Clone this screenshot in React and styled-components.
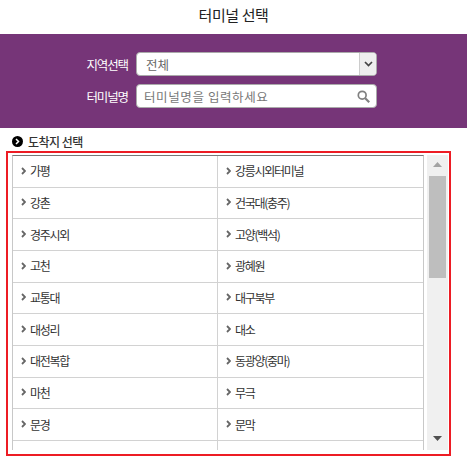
import React from 'react'
import styled, { createGlobalStyle } from 'styled-components'

const GlobalStyle = createGlobalStyle`
  html, body {
    margin: 0;
    padding: 0;
    background: #fff;
    font-family: "Noto Sans CJK KR", "Noto Sans", sans-serif;
  }
  * {
    box-sizing: border-box;
  }
`

const Page = styled.div`
  width: 467px;
  height: 468px;
  overflow: hidden;
`

const Title = styled.h1`
  margin: 0;
  height: 34px;
  line-height: 30px;
  text-align: center;
  font-size: 15px;
  font-weight: 400;
  letter-spacing: -0.4px;
  color: #222;
`

const SearchPanel = styled.div`
  height: 94px;
  padding-top: 18px;
  background: #763578;
  display: flex;
  flex-direction: column;
  gap: 8px;
`

const FieldRow = styled.div`
  display: flex;
  align-items: center;
  gap: 8px;
`

const FieldLabel = styled.label`
  width: 128px;
  text-align: right;
  font-size: 12.5px;
  letter-spacing: -1.1px;
  color: #fff;
`

const Control = styled.div`
  width: 241px;
  height: 24px;
  display: flex;
  align-items: center;
  background: #fff;
  border: 1px solid #aaa;
  border-radius: 4px;
  font-size: 12.5px;
  color: #666;
`

const SelectValue = styled.span`
  flex: 1;
  padding-left: 9px;
`

const SelectArrow = styled.span`
  width: 17px;
  height: 100%;
  display: flex;
  align-items: center;
  justify-content: center;
  background: #eee;
  border-left: 1px solid #ccc;
  border-radius: 0 3px 3px 0;
`

const Placeholder = styled.span`
  flex: 1;
  padding-left: 7px;
  letter-spacing: 0.6px;
  color: #777;
`

const SearchIcon = styled.svg`
  width: 13px;
  height: 13px;
  margin-right: 6px;
`

const SectionHeading = styled.h2`
  margin: 0;
  height: 23px;
  padding: 3px 0 0 12px;
  display: flex;
  align-items: center;
  gap: 5px;
  font-size: 12px;
  font-weight: 500;
  letter-spacing: -0.5px;
  color: #333;
`

const Bullet = styled.span`
  width: 11px;
  height: 11px;
  display: flex;
  align-items: center;
  justify-content: center;
  border-radius: 50%;
  background: #000;
`

const ListFrame = styled.div`
  width: 445px;
  height: 305px;
  margin-left: 6px;
  padding: 2px 1px 4px 4px;
  display: flex;
  gap: 3px;
  border: 2px solid #ed1c24;
`

const TerminalGrid = styled.ul`
  width: 412px;
  height: 295px;
  margin: 0;
  padding: 0;
  list-style: none;
  overflow: hidden;
  display: grid;
  grid-template-columns: 205px 206px;
  grid-auto-rows: 31.67px;
  border-top: 1px solid #777;
  border-left: 1px solid #c8c8c8;
  border-right: 1px solid #c8c8c8;
`

const TerminalItem = styled.li`
  padding: 0 0 1px 8px;
  display: flex;
  align-items: center;
  gap: 4px;
  font-size: 12px;
  letter-spacing: -1.3px;
  color: #333;
  border-bottom: 1px solid #d2d2d2;
  border-right: ${(props) => (props.$first ? '1px solid #d2d2d2' : 'none')};
`

const Scrollbar = styled.div`
  width: 21px;
  height: 295px;
  padding-top: 21px;
  position: relative;
  display: flex;
  justify-content: center;
  background: #f0f0f0;
`

const ScrollThumb = styled.div`
  width: 17px;
  height: 102px;
  background: #bebebe;
`

const ScrollArrow = styled.svg`
  position: absolute;
  left: 6px;
  width: 9px;
  height: 5px;
  top: ${(props) => props.$top}px;
`

const terminals = [
  '가평', '강릉시외터미널',
  '강촌', '건국대(충주)',
  '경주시외', '고양(백석)',
  '고천', '광혜원',
  '교통대', '대구북부',
  '대성리', '대소',
  '대전복합', '동광양(중마)',
  '마천', '무극',
  '문경', '문막',
  '', '',
]

const Chevron = () => (
  <svg width="5" height="8" viewBox="0 0 5 8">
    <path d="M1 1l3 3-3 3" fill="none" stroke="#666" strokeWidth="1.8" />
  </svg>
)

export default function App() {
  return (
    <Page>
      <GlobalStyle />
      <Title>터미널 선택</Title>
      <SearchPanel>
        <FieldRow>
          <FieldLabel>지역선택</FieldLabel>
          <Control>
            <SelectValue>전체</SelectValue>
            <SelectArrow>
              <svg width="9" height="6" viewBox="0 0 9 6">
                <path d="M1 1l3.5 3.5L8 1" fill="none" stroke="#444" strokeWidth="1.7" />
              </svg>
            </SelectArrow>
          </Control>
        </FieldRow>
        <FieldRow>
          <FieldLabel>터미널명</FieldLabel>
          <Control>
            <Placeholder>터미널명을 입력하세요</Placeholder>
            <SearchIcon viewBox="0 0 13 13">
              <circle cx="5.2" cy="5.2" r="3.9" fill="none" stroke="#808080" strokeWidth="1.7" />
              <path d="M8.2 8.2l4 4" fill="none" stroke="#808080" strokeWidth="2.2" />
            </SearchIcon>
          </Control>
        </FieldRow>
      </SearchPanel>
      <SectionHeading>
        <Bullet>
          <svg width="5" height="7" viewBox="0 0 5 7">
            <path d="M1 1l2.5 2.5L1 6" fill="none" stroke="#fff" strokeWidth="1.5" />
          </svg>
        </Bullet>
        도착지 선택
      </SectionHeading>
      <ListFrame>
        <TerminalGrid>
          {terminals.map((name, index) => (
            <TerminalItem key={index} $first={index % 2 === 0}>
              {name && <Chevron />}
              {name}
            </TerminalItem>
          ))}
        </TerminalGrid>
        <Scrollbar>
          <ScrollArrow $top={7} viewBox="0 0 9 5">
            <path d="M4.5 0L9 5H0z" fill="#a3a3a3" />
          </ScrollArrow>
          <ScrollThumb />
          <ScrollArrow $top={281} viewBox="0 0 9 5">
            <path d="M0 0h9L4.5 5z" fill="#505050" />
          </ScrollArrow>
        </Scrollbar>
      </ListFrame>
    </Page>
  )
}
